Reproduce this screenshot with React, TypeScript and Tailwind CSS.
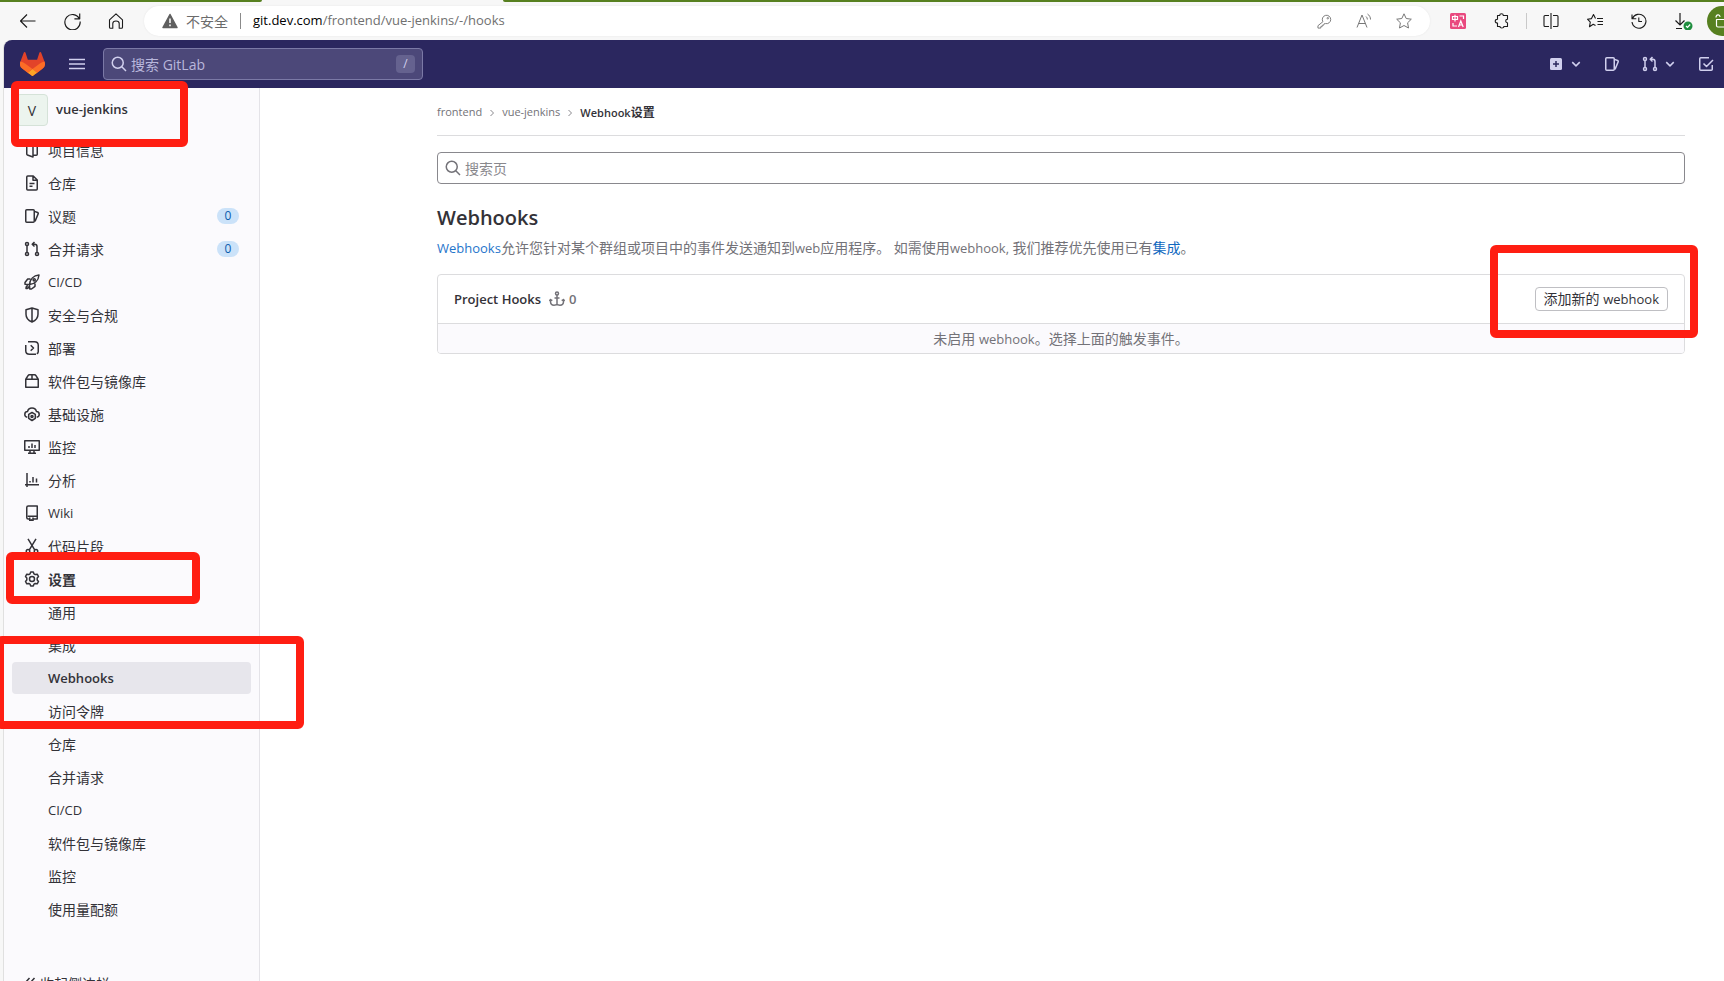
import type { ReactNode } from "react";

const font =
  "font-['Open_Sans','Noto_Sans_CJK_SC',sans-serif]";

type IconProps = { children: ReactNode; className?: string; stroke?: string };

function Icon({ children, className = "size-4", stroke = "1.5" }: IconProps) {
  return (
    <svg
      viewBox="0 0 16 16"
      className={`shrink-0 ${className}`}
      fill="none"
      stroke="currentColor"
      strokeWidth={stroke}
      strokeLinejoin="round"
      aria-hidden="true"
    >
      {children}
    </svg>
  );
}

function En({ children }: { children: ReactNode }) {
  return <span className="text-[13px]">{children}</span>;
}

const issues = (
  <>
    <rect x="1.75" y="1.75" width="8.5" height="12.5" rx="1" />
    <path d="M10.5 3.4l3.1 1.1c.5.2.8.7.6 1.2L11 13.4" />
  </>
);

const merge = (
  <>
    <circle cx="3" cy="3" r="1.5" />
    <circle cx="3" cy="13" r="1.5" />
    <circle cx="13" cy="13" r="1.5" />
    <path d="M3 4.5v7M13 11.5V5.5c0-1.4-.8-2.25-2.2-2.25H8.5M10.5 1L8.2 3.25l2.3 2.25" />
  </>
);

const chart = <path d="M3 1v14M1 12.75h14M6 9v1.6M9 5v5.6M12.5 6.5v4.1" />;

type Item = { label: ReactNode; icon: ReactNode; badge?: string; active?: boolean };

const items: Item[] = [
  {
    label: "项目信息",
    icon: <path d="M2.750 3.200L9 1v14l-5.600-2a.9.9 0 0 1-.65-.9zM9 2.750h3.250c.6 0 1 .4 1 1v8.500c0 .6-.4 1-1 1H9" />,
  },
  {
    label: "仓库",
    icon: <path d="M3.75 1h5.5l4 4v9c0 .6-.4 1-1 1h-8.500c-.6 0-1-.4-1-1V2c0-.6.4-1 1-1zM9 1v4.250h4M5.500 8.500h5M5.500 11.250h3" />,
  },
  { label: "议题", icon: issues, badge: "0" },
  { label: "合并请求", icon: merge, badge: "0" },
  {
    label: <En>CI/CD</En>,
    icon: (
      <>
        <path d="M5.500 10.500C6 5.500 9.500 1.500 15 1c-.5 5.500-4.500 9-9.500 9.500zM6.500 5H3.700L1 8.500v1.800l4 .2M11 9.500v2.800L7.500 15H5.700l-.2-4M4 11.500c-1.200.3-2 1.500-2 3 1.500 0 2.700-.8 3-2" />
        <circle cx="10.200" cy="5.800" r="1.100" />
      </>
    ),
  },
  { label: "安全与合规", icon: <path d="M8 1l6 1.750v4.500c0 3.500-2.200 6.200-6 7.750-3.800-1.550-6-4.250-6-7.750v-4.500zM8 1v14" /> },
  { label: "部署", icon: <path d="M4 1.750h6.500c2.100 0 3.750 1.400 3.750 3.500v6M12 14.250H5.500c-2.100 0-3.750-1.400-3.750-3.500V5M1.750 5.700V5M14.250 10.500v1.200c0 1-.5 1.700-1.500 2.100M6.700 5.300L9.500 8l-2.800 2.700" /> },
  { label: "软件包与镜像库", icon: <path d="M1.750 6.250h12.500v8H1.750zM1.750 6.250l2.300-3.700c.3-.5.8-.8 1.400-.8h5.100c.6 0 1.100.3 1.400.8l2.300 3.700M8 1.750v4.500" /> },
  {
    label: "基础设施",
    icon: (
      <>
        <path d="M3.300 11.250C1.700 10.900.8 9.800.8 8.400c0-1.500 1.100-2.700 2.700-2.800C4 3.500 5.700 2 8 2s4 1.500 4.500 3.600c1.600.1 2.700 1.300 2.700 2.800 0 1.400-.9 2.500-2.500 2.850" />
        <path d="M8 6.500l3.300 1.900v4L8 14.500l-3.300-2.100v-4z" />
        <circle cx="8" cy="10.500" r="1" />
      </>
    ),
  },
  { label: "监控", icon: <path d="M.75 1.750h14.500v9.500H.75zM4 14.250h8M6 11.250v3M10 11.250v3M5 7v2M8 4.500V9M11 6v3" /> },
  { label: "分析", icon: chart },
  { label: <En>Wiki</En>, icon: <path d="M3.750 11.250h9.500V1h-9c-.9 0-1.500.6-1.500 1.500v10c0 1 .6 1.500 1.500 1.500h1.500M13.250 11.250V14H9M5.750 12.500V16l1.600-1.200L9 16v-3.500" /> },
  {
    label: "代码片段",
    icon: (
      <>
        <path d="M4 .8l6.700 11M12 .8L5.300 11.800" />
        <circle cx="4" cy="13.250" r="1.750" />
        <circle cx="12" cy="13.250" r="1.750" />
      </>
    ),
  },
  {
    label: "设置",
    active: true,
    icon: (
      <>
        <path d="M6.700 1h2.600l.7 1.900 1.200.7 2-.4 1.300 2.300L13.200 7v2l1.300 1.500-1.300 2.300-2-.4-1.200.7-.7 1.900H6.700L6 13.100l-1.200-.7-2 .4-1.300-2.300L2.800 9V7L1.500 5.500l1.300-2.300 2 .4L6 2.900z" />
        <circle cx="8" cy="8" r="2.500" />
      </>
    ),
  },
];

const settings: { label: ReactNode; active?: boolean }[] = [
  { label: "通用" },
  { label: "集成" },
  { label: <En>Webhooks</En>, active: true },
  { label: "访问令牌" },
  { label: "仓库" },
  { label: "合并请求" },
  { label: <En>CI/CD</En> },
  { label: "软件包与镜像库" },
  { label: "监控" },
  { label: "使用量配额" },
];

function BrowserButton({ label, children, className = "" }: { label: string; children: ReactNode; className?: string }) {
  return (
    <button type="button" aria-label={label} className={`flex size-6 shrink-0 items-center justify-center ${className}`}>
      {children}
    </button>
  );
}

function BrowserBar() {
  return (
    <div className="bg-[#f7f7f7]">
      <div className="flex h-[2px] justify-between">
        <div className="w-[262px] rounded-br bg-[#578020]" />
        <div className="ml-[241px] flex-1 rounded-bl bg-[#578020]" />
      </div>
      <div className="flex h-[38px] items-center overflow-hidden pl-4 text-[#1b1b1b]">
        <BrowserButton label="返回">
          <Icon stroke="1.100"><path d="M.5 8h15M7 1.500L.5 8 7 14.500" /></Icon>
        </BrowserButton>
        <BrowserButton label="刷新" className="ml-5">
          <Icon stroke="1.100" className="size-[17px]"><path d="M14.500 5.500A7.200 7.200 0 1 0 15.200 8M14.800.5v5h-5" /></Icon>
        </BrowserButton>
        <BrowserButton label="主页" className="ml-5">
          <Icon stroke="1.100"><path d="M1.500 6.800L8 .8l6.500 6v7.400c0 .6-.4 1-1 1h-2.300v-4.700c0-1.500-1.200-2.500-3.200-2.500s-3.200 1-3.200 2.500v4.700H2.500c-.6 0-1-.4-1-1z" /></Icon>
        </BrowserButton>
        <div className="ml-4 flex h-[30px] flex-1 items-center rounded-full bg-white pr-[14px] pl-[18px] shadow-[0_0_2px_#e4e4e4]">
          <svg viewBox="0 0 16 16" className="size-4 shrink-0" aria-hidden="true">
            <path d="M8 1.500L15 14.500H1z" fill="#5f5f5f" stroke="#5f5f5f" strokeWidth="1.500" strokeLinejoin="round" />
            <path d="M8 5.500v4.500M8 11.500v1.700" stroke="#fff" strokeWidth="1.500" />
          </svg>
          <span className="ml-2 text-[14px] text-[#6b6b6b]">不安全</span>
          <span className="mx-3 h-4 w-px bg-[#8a8a8a]" />
          <span className="flex-1 text-[13px] text-[#707070]">
            <span className="text-black">git.dev.com</span>/frontend/vue-jenkins/-/hooks
          </span>
          <div className="flex items-center gap-4 text-[#777]">
            <BrowserButton label="密码">
              <Icon stroke="1" className="size-[15px]">
                <path d="M6.300 8.200A4.500 4.500 0 1 1 9 10.200l-1.500.3-.5 1.500H5.500V13.500H4V15H1v-2.500z" />
                <circle cx="11.500" cy="4.500" r=".8" />
              </Icon>
            </BrowserButton>
            <BrowserButton label="大声朗读">
              <Icon stroke="1"><path d="M1 14.500L6 2l5 12.500M2.700 10.500h6.600M10 3.500c.9.700 1.400 1.800 1.400 3M11.500 1c2 1.300 3 3.300 3 5.500" /></Icon>
            </BrowserButton>
            <BrowserButton label="收藏">
              <Icon stroke="1"><path d="M8 .8l2.200 4.700 5.100.7-3.700 3.600.9 5.200L8 12.500 3.500 15l.9-5.200L.7 6.200l5.100-.7z" /></Icon>
            </BrowserButton>
          </div>
        </div>
        <BrowserButton label="翻译" className="ml-4">
          <svg viewBox="0 0 16 16" className="size-4" fill="none" stroke="#fff" strokeWidth="1.200" aria-hidden="true">
            <rect width="16" height="16" rx="1.500" fill="#e9497f" stroke="none" />
            <path d="M2.500 3.500h5v3h-5zM5 1.800v6.700M9.500 3h4v3M3 10v3h4M8.500 14l2.300-6 2.400 6M9.300 12h3" />
          </svg>
        </BrowserButton>
        <BrowserButton label="扩展" className="ml-5">
          <Icon stroke="1.100"><path d="M3.500 2.500h2.200c0-2.300 3.600-2.300 3.600 0h4.200v3.700c-2.300-.3-2.300 3.800 0 3.500v3.800H9.800c.2 2-4 2-3.800 0H3.500V10C.5 10.300.5 6 3.500 6.200z" /></Icon>
        </BrowserButton>
        <span className="mx-3 h-4 w-px shrink-0 bg-[#c9c9c9]" />
        <BrowserButton label="分屏">
          <Icon stroke="1.100"><path d="M8 0v16M6 2.500H2c-.6 0-1 .4-1 1v9c0 .6.400 1 1 1h4M10 2.500h4c.6 0 1 .4 1 1v9c0 .6-.4 1-1 1h-4" /></Icon>
        </BrowserButton>
        <BrowserButton label="收藏夹" className="ml-5">
          <Icon stroke="1.100"><path d="M10 5.500h6M10.500 8.500H16M10.500 11.500H16M8.500 12.500L6.200 11.300 2.500 13.700l.8-4.500L.5 6.200l4-.6L6.500 1.500l2 4" /></Icon>
        </BrowserButton>
        <BrowserButton label="历史记录" className="ml-5">
          <Icon stroke="1.100"><path d="M1 1.500v4.300h4.300M1.500 5.500A7 7 0 1 1 1 9M7.800 4.500v4H11" /></Icon>
        </BrowserButton>
        <BrowserButton label="下载" className="ml-5">
          <svg viewBox="0 0 20 18" className="h-[18px] w-5 shrink-0" fill="none" stroke="currentColor" strokeWidth="1.200" aria-hidden="true">
            <path d="M7 1v12M2.500 8.500L7 13l4.500-4.500M3 16.500h6" />
            <circle cx="15" cy="14" r="4.500" fill="#1e8e3e" stroke="none" />
            <path d="M13 14l1.500 1.500 2.700-3" stroke="#fff" />
          </svg>
        </BrowserButton>
        <button type="button" aria-label="个人资料" className="-mr-[15px] ml-3 flex h-[30px] w-[32px] shrink-0 items-center justify-center rounded-full bg-[#578020] text-white">
          <Icon stroke="1.200"><path d="M1 4.500C1 1 5 1 5 4M1.500 6.500h12v6c0 1-.5 1.500-1.500 1.500H3c-1 0-1.500-.5-1.500-1.500z" /></Icon>
        </button>
      </div>
    </div>
  );
}

function Navbar() {
  return (
    <header className="flex h-12 items-center rounded-tl-lg bg-[#2b275f] pr-[10px] pl-4 text-[#d1d0ee]">
      <a href="#home" aria-label="GitLab" className="flex h-6 w-[25px]">
        <svg viewBox="0 0 25 24" className="h-6 w-[25px]" aria-hidden="true">
          <path d="m24.507 9.5-.034-.09L21.082.562a.896.896 0 0 0-1.694.091l-2.290 7.010H7.825L5.535.653a.898.898 0 0 0-1.694-.09L.451 9.411.416 9.500a6.297 6.297 0 0 0 2.090 7.278l.012.010.030.022 5.160 3.867 2.560 1.935 1.554 1.176a1.051 1.051 0 0 0 1.268 0l1.555-1.176 2.560-1.935 5.197-3.890.014-.010A6.297 6.297 0 0 0 24.507 9.500Z" fill="#E24329" />
          <path d="m24.507 9.500-.034-.090a11.440 11.440 0 0 0-4.560 2.051l-7.447 5.632 4.742 3.584 5.197-3.890.014-.010A6.297 6.297 0 0 0 24.507 9.500Z" fill="#FC6D26" />
          <path d="m7.707 20.677 2.560 1.935 1.555 1.176a1.051 1.051 0 0 0 1.268 0l1.555-1.176 2.560-1.935-4.743-3.584-4.755 3.584Z" fill="#FCA326" />
          <path d="M5.010 11.461a11.430 11.430 0 0 0-4.560-2.050L.416 9.500a6.297 6.297 0 0 0 2.090 7.278l.012.010.030.022 5.160 3.867 4.745-3.584-7.444-5.632Z" fill="#FC6D26" />
        </svg>
      </a>
      <button type="button" aria-label="菜单" className="ml-6">
        <Icon><path d="M0 3.500h16M0 8h16M0 12.500h16" /></Icon>
      </button>
      <div className="ml-[18px] flex h-8 w-80 items-center rounded border border-[#7b79a6] bg-[#4c4879] px-[7px]">
        <Icon><circle cx="6.750" cy="6.750" r="5.500" /><path d="M10.800 10.800L15 15" /></Icon>
        <input aria-label="搜索 GitLab" placeholder="搜索 GitLab" className="ml-1 min-w-0 flex-1 bg-transparent text-[14px] placeholder:text-[#b9b7dc] outline-none" />
        <kbd className={`flex h-[18px] w-[19px] items-center justify-center rounded-sm bg-[#65628f] text-[12px] ${font}`}>/</kbd>
      </div>
      <div className="ml-auto flex items-center">
        <button type="button" aria-label="新建" className="flex items-center gap-[6px]">
          <svg viewBox="0 0 16 16" className="size-4" aria-hidden="true">
            <rect x="2" y="2" width="12" height="12" rx="1.500" fill="currentColor" />
            <path d="M8 5v6M5 8h6" stroke="#2b275f" strokeWidth="1.500" />
          </svg>
          <Icon className="size-3" stroke="2"><path d="M3 5.500l5 5 5-5" /></Icon>
        </button>
        <button type="button" aria-label="议题" className="ml-[22px]"><Icon>{issues}</Icon></button>
        <button type="button" aria-label="合并请求" className="ml-[22px] flex items-center gap-[6px]">
          <Icon>{merge}</Icon>
          <Icon className="size-3" stroke="2"><path d="M3 5.500l5 5 5-5" /></Icon>
        </button>
        <button type="button" aria-label="待办事项" className="ml-[22px]">
          <Icon><path d="M11 1.750H2.750c-.6 0-1 .4-1 1v10.500c0 .6.400 1 1 1h10.500c.6 0 1-.4 1-1V9M5.500 7.500l3 3L15 4" /></Icon>
        </button>
      </div>
    </header>
  );
}

function Sidebar() {
  return (
    <aside className="w-64 shrink-0 border-r border-[#e4e3e8] bg-[#fbfafd] px-2 pt-[6px] text-[14px] text-[#333238]">
      <a href="#project" className="flex h-8 items-center gap-2 pl-1 font-semibold">
        <span className="flex size-8 items-center justify-center rounded border border-[#d5e2d8] bg-[#ecf4ee] text-[14px] font-normal">V</span>
        <En>vue-jenkins</En>
      </a>
      <nav aria-label="项目导航" className="mt-2 flex flex-col gap-px">
        {items.map((item, i) => (
          <a key={i} href="#item" className={`flex h-8 items-center gap-2 pr-3 pl-3 ${item.active ? "font-semibold" : ""}`}>
            <Icon>{item.icon}</Icon>
            <span className="flex-1">{item.label}</span>
            {item.badge && (
              <span className="flex h-4 w-[22px] items-center justify-center rounded-full bg-[#cbe2f9] text-[12px] text-[#0b5cad]">{item.badge}</span>
            )}
          </a>
        ))}
        {settings.map((item, i) => (
          <a key={i} href="#setting" className={`flex h-8 items-center rounded pl-9 ${item.active ? "bg-[#e7e6ec] font-semibold" : ""}`}>
            <span>{item.label}</span>
          </a>
        ))}
      </nav>
      <button type="button" className="mt-[34px] flex h-12 items-center gap-[2px] pl-[10px]">
        <Icon><path d="M7.500 3L3 8l4.500 5M12.500 3L8 8l4.500 5" /></Icon>
        收起侧边栏
      </button>
    </aside>
  );
}

function Crumb() {
  return <Icon className="size-2 text-[#89888d]" stroke="2"><path d="M5 2l6 6-6 6" /></Icon>;
}

function Main() {
  return (
    <main className="mr-[39px] ml-[177px] min-w-0 flex-1 text-[14px] text-[#737278]">
      <nav aria-label="面包屑" className="flex h-12 items-center gap-[6px] border-b border-[#dcdcde] pt-[2px] text-[11px]">
        <a href="#frontend">frontend</a>
        <Crumb />
        <a href="#project">vue-jenkins</a>
        <Crumb />
        <a href="#webhooks" className="font-semibold text-[#333238]">Webhook<span className="text-[12px]">设置</span></a>
      </nav>
      <div className="mt-4 flex h-8 items-center rounded border border-[#89888d] px-[7px]">
        <Icon><circle cx="6.750" cy="6.750" r="5.500" /><path d="M10.800 10.800L15 15" /></Icon>
        <input aria-label="搜索页" placeholder="搜索页" className="ml-1 min-w-0 flex-1 outline-none placeholder:text-[#89888d]" />
      </div>
      <h1 className="mt-5 text-[20px] leading-7 font-semibold text-[#333238]">Webhooks</h1>
      <p className="mt-[6px] leading-5">
        <a href="#docs" className="text-[#1f75cb]"><En>Webhooks</En></a>允许您针对某个群组或项目中的事件发送通知到<En>web</En>应用程序。 如需使用<En>webhook, </En>我们推荐优先使用已有<a href="#integrations" className="text-[#1068bf]">集成</a>。
      </p>
      <section className="mt-4 overflow-hidden rounded border border-[#dcdcde]">
        <div className="flex h-[49px] items-center border-b border-[#dcdcde] px-4">
          <h2 className="font-semibold text-[#333238]"><En>Project Hooks</En></h2>
          <Icon className="ml-2 size-4">
            <circle cx="8" cy="2.500" r="1.500" />
            <path d="M8 4v10.500M5.500 7h5M1.500 8.500v2c0 2.300 1.500 3.700 3.500 3.700 1.500 0 2.500-.3 3-1.200.5.900 1.500 1.200 3 1.200 2 0 3.500-1.400 3.500-3.700v-2M.5 10.200l1-1.700 1.800 1.200M15.500 10.200l-1-1.700-1.800 1.200" />
          </Icon>
          <span className="ml-1 font-semibold"><En>0</En></span>
          <button type="button" className="ml-auto h-6 rounded border border-[#bfbfc3] bg-white px-2 leading-5 text-[#333238]">
            添加新的 <En>webhook</En>
          </button>
        </div>
        <p className="h-[29px] bg-[#fbfafd] text-center leading-[29px]">未启用 <En>webhook</En>。选择上面的触发事件。</p>
      </section>
    </main>
  );
}

function Highlight({ className }: { className: string }) {
  return <div className={`pointer-events-none absolute rounded-md border-8 border-[#ff1e12] ${className}`} />;
}

export default function App() {
  return (
    <div className={`relative h-screen overflow-hidden bg-[#f7f7f7] ${font}`}>
      <BrowserBar />
      <div className="ml-[3px] rounded-tl-lg border-l border-[#e0e0e0]">
        <Navbar />
        <div className="flex bg-white">
          <Sidebar />
          <Main />
        </div>
      </div>
      <Highlight className="top-[81px] left-[11px] h-[66px] w-[177px]" />
      <Highlight className="top-[552px] left-[6px] h-[52px] w-[194px]" />
      <Highlight className="top-[636px] -left-1 h-[93px] w-[308px]" />
      <Highlight className="top-[245px] right-[26px] h-[93px] w-[208px]" />
    </div>
  );
}
